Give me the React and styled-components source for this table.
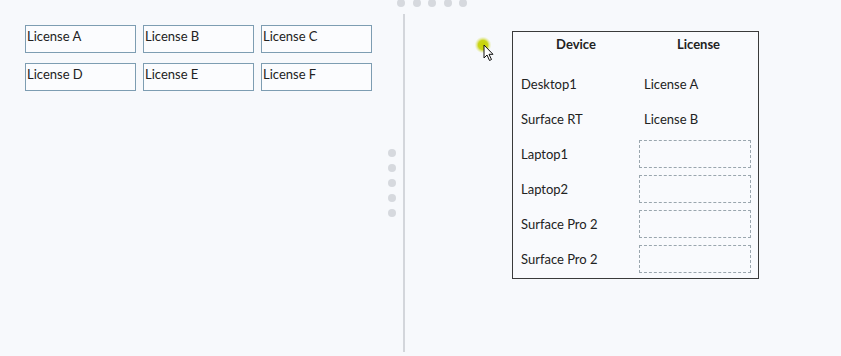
import React from 'react';
import styled, { createGlobalStyle } from 'styled-components';

const licenses = ['License A', 'License B', 'License C', 'License D', 'License E', 'License F'];

const devices = [
    { name: 'Desktop1', license: 'License A' },
    { name: 'Surface RT', license: 'License B' },
    { name: 'Laptop1' },
    { name: 'Laptop2' },
    { name: 'Surface Pro 2' },
    { name: 'Surface Pro 2' },
];

const Global = createGlobalStyle`
    html, body {
        margin: 0;
        padding: 0;
        background: #f7f9fc;
    }
    body {
        font-family: Lato, 'Liberation Sans', sans-serif;
        color: #222;
    }
`;

const App = () => {
    return (
        <>
            <Global />
            <Page>
                <TopHandle>
                    {[0, 1, 2, 3, 4].map(i => <Dot key={i} />)}
                </TopHandle>
                <LeftPane>
                    <LicenseGrid>
                        {licenses.map(l => <LicenseBox key={l}>{l}</LicenseBox>)}
                    </LicenseGrid>
                </LeftPane>
                <Divider>
                    <SideHandle>
                        {[0, 1, 2, 3, 4].map(i => <Dot key={i} />)}
                    </SideHandle>
                </Divider>
                <RightPane>
                    <Cursor>
                        <svg width="24" height="28" viewBox="0 0 24 28">
                            <defs>
                                <radialGradient id="glow">
                                    <stop offset="0%" stopColor="#c6d200" />
                                    <stop offset="55%" stopColor="#cbd61a" />
                                    <stop offset="100%" stopColor="#e4ea9a" stopOpacity="0" />
                                </radialGradient>
                            </defs>
                            <circle cx="8" cy="8" r="8.5" fill="url(#glow)" />
                            <path d="M9 8 L9 21 L12 18 L14.5 23.5 L16.5 22.5 L14 17.3 L18 17.3 Z"
                                  fill="#fff" stroke="#111" strokeWidth="1" strokeLinejoin="round" />
                        </svg>
                    </Cursor>
                    <Table>
                        <HeaderRow>
                            <HeaderCell>Device</HeaderCell>
                            <HeaderCell>License</HeaderCell>
                        </HeaderRow>
                        <Rows>
                            {devices.map((d, i) => (
                                <Row key={i}>
                                    <DeviceCell>{d.name}</DeviceCell>
                                    {d.license
                                        ? <AssignedCell>{d.license}</AssignedCell>
                                        : <DropSlot />}
                                </Row>
                            ))}
                        </Rows>
                    </Table>
                </RightPane>
            </Page>
        </>
    );
};

const Page = styled.div`
    position: relative;
    display: flex;
    width: 841px;
    height: 356px;
    overflow: hidden;
    font-size: 13px;
`;

const Dot = styled.div`
    width: 8px;
    height: 8px;
    border-radius: 50%;
    background: #d6d9de;
`;

const TopHandle = styled.div`
    position: absolute;
    top: -1px;
    left: 397px;
    display: flex;
    gap: 7.5px;
`;

const LeftPane = styled.div`
    width: 403px;
    padding: 25px 0 0 25px;
    box-sizing: border-box;
`;

const LicenseGrid = styled.div`
    display: grid;
    grid-template-columns: repeat(3, 111px);
    grid-auto-rows: 28px;
    column-gap: 7px;
    row-gap: 10px;
`;

const LicenseBox = styled.div`
    border: 1px solid #7d9db2;
    background: #fbfcfe;
    padding: 2px 0 0 1px;
    line-height: 17px;
    box-sizing: border-box;
`;

const Divider = styled.div`
    position: relative;
    width: 2px;
    margin: 14px 0 4px;
    background: #d3d6db;
`;

const SideHandle = styled.div`
    position: absolute;
    top: 135px;
    left: -15px;
    display: flex;
    flex-direction: column;
    gap: 7px;
`;

const RightPane = styled.div`
    position: relative;
    flex: 1;
    padding: 31px 0 0 107px;
`;

const Cursor = styled.div`
    position: absolute;
    top: 37px;
    left: 70px;
    line-height: 0;
`;

const Table = styled.div`
    width: 247px;
    height: 248px;
    border: 1px solid #3a3a3a;
    box-sizing: border-box;
    background: #f9fafd;
`;

const HeaderRow = styled.div`
    display: grid;
    grid-template-columns: 126px 1fr;
    height: 24px;
    align-items: center;
`;

const HeaderCell = styled.div`
    text-align: center;
    font-weight: 700;
`;

const Rows = styled.div`
    padding-top: 10px;
`;

const Row = styled.div`
    display: grid;
    grid-template-columns: 126px 112px;
    height: 35px;
    align-items: center;
`;

const DeviceCell = styled.div`
    padding-left: 8px;
`;

const AssignedCell = styled.div`
    padding-left: 5px;
`;

const DropSlot = styled.div`
    height: 28px;
    border: 1px dashed #9aa6ae;
    box-sizing: border-box;
`;

export default App;
